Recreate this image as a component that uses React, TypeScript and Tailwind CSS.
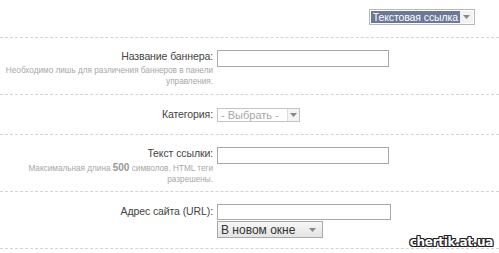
function Arrow() {
  return (
    <svg width="7" height="4" viewBox="0 0 7 4" className="block">
      <path d="M0 0h7L3.5 4z" fill="#888" />
    </svg>
  );
}

function Row({
  label,
  hint,
  children,
  className = "",
}: {
  label: string;
  hint?: React.ReactNode;
  children: React.ReactNode;
  className?: string;
}) {
  return (
    <div className={`grid grid-cols-[213px_1fr] gap-x-[4px] border-b border-dashed border-[#d4d4d4] ${className}`}>
      <div className="text-right">
        <div className="text-[10.5px] leading-[13px] tracking-[-0.1px] text-[#444]">{label}</div>
        {hint && (
          <div className="mt-[2px] whitespace-nowrap text-[8.2px] leading-[11px] text-[#a8a8a8]">{hint}</div>
        )}
      </div>
      <div>{children}</div>
    </div>
  );
}

export default function App() {
  return (
    <div className="relative w-[499px] h-[253px] overflow-hidden bg-white font-['Liberation_Sans',Arial,sans-serif]">
      <div className="flex h-[38px] justify-end border-b border-dashed border-[#d4d4d4] pt-[9px] pr-[24px]">
        <div className="flex h-[16px] items-stretch border border-[#b8b8b8] bg-white p-[1px]">
          <div className="flex items-center bg-[#6b7898] px-[2px] text-[10.5px] leading-none tracking-[-0.1px] text-white">
            Текстовая ссылка
          </div>
          <div className="flex w-[13px] items-center justify-center bg-[#f2f2f2]">
            <Arrow />
          </div>
        </div>
      </div>

      <Row
        className="h-[57px] pt-[12px]"
        label="Название баннера:"
        hint={<>Необходимо лишь для различения баннеров в панели<br />управления.</>}
      >
        <div className="h-[17px] w-[172px] border border-[#a8a8a8] bg-white" />
      </Row>

      <Row className="h-[40px] pt-[13px]" label="Категория:">
        <div className="flex h-[14px] w-[83px] items-stretch border border-[#c4c4c4] bg-white">
          <div className="flex flex-1 items-center px-[3px] text-[11px] leading-none text-[#a8a8a8]">- Выбрать -</div>
          <div className="flex w-[12px] items-center justify-center border-l border-[#dcdcdc] bg-[#f4f4f4]">
            <Arrow />
          </div>
        </div>
      </Row>

      <Row
        className="h-[57px] pt-[12px]"
        label="Текст ссылки:"
        hint={
          <>
            Максимальная длина <b className="text-[10px] text-[#999]">500</b> символов. HTML теги
            <br />
            разрешены.
          </>
        }
      >
        <div className="h-[17px] w-[172px] border border-[#a8a8a8] bg-white" />
      </Row>

      <Row className="h-[57px] pt-[13px]" label="Адрес сайта (URL):">
        <div className="-mt-[1px] h-[16px] w-[174px] border border-[#a8a8a8] bg-white" />
        <div className="mt-[1px] flex h-[17px] w-[106px] items-center justify-between border border-[#a8a8a8] bg-gradient-to-b from-[#f6f6f6] to-[#e4e4e4] pl-[3px] pr-[6px]">
          <span className="text-[12px] leading-none text-[#333]">В новом окне</span>
          <Arrow />
        </div>
      </Row>

      <div className="absolute bottom-[5px] right-[6px] font-['DejaVu_Sans',sans-serif] text-[12px] font-bold leading-none tracking-[-0.3px] text-white [text-shadow:1px_1px_0_#222,-1px_-1px_0_#222,1px_-1px_0_#222,-1px_1px_0_#222,0_1px_0_#222,0_-1px_0_#222,1px_0_0_#222,-1px_0_0_#222]">
        chertik.at.ua
      </div>
    </div>
  );
}
